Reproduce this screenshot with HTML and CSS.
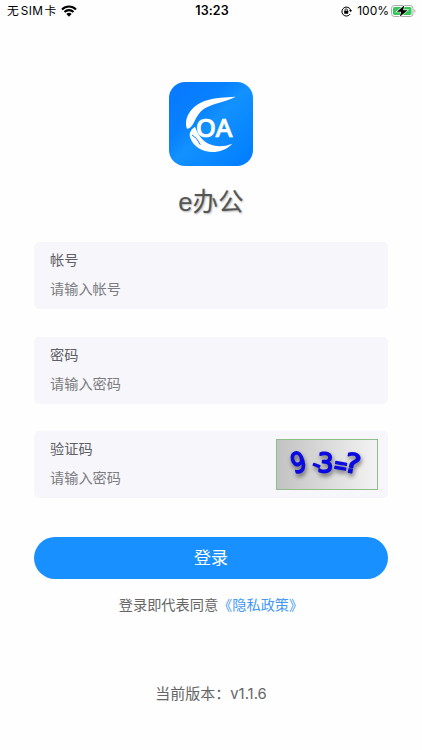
FILE: index.html
```html
<!DOCTYPE html>
<html lang="zh-CN">
<head>
    <meta charset="UTF-8">
    <meta name="viewport" content="width=device-width, initial-scale=1.0">
    <title>e办公</title>
    <link rel="stylesheet" href="styles.css">
</head>
<body>
    <header class="status-bar">
        <div class="status-left">
            <span>无</span><span class="sim">SIM</span><span>卡</span>
            <svg class="wifi" width="16" height="12" viewBox="0 0 16 12">
                <path d="M1 4.4a10 10 0 0 1 14 0M3.5 7a6.4 6.4 0 0 1 9 0" fill="none" stroke="#000" stroke-width="2.1"/>
                <path d="M8 11.7 5.4 9.1a3.7 3.7 0 0 1 5.2 0z"/>
            </svg>
        </div>
        <div class="status-time">13:23</div>
        <div class="status-right">
            <svg class="lock" width="11" height="11" viewBox="0 0 11 11">
                <path d="M9.7 4.2A4.5 4.5 0 1 0 9.2 8" fill="none" stroke="#000" stroke-width="1"/>
                <path d="M8 4.1h3L9.7 6.2z"/>
                <rect x="3.2" y="4.8" width="4" height="3" rx=".4"/>
                <path d="M4 5V4a1.2 1.2 0 0 1 2.4 0v1" fill="none" stroke="#000" stroke-width=".8"/>
            </svg>
            <span>100%</span>
            <svg class="battery" width="26" height="13" viewBox="0 0 26 13">
                <rect x=".5" y=".5" width="21.5" height="11" rx="3" fill="#fff" stroke="#aaa"/>
                <rect x="2" y="2" width="18.5" height="8" rx="1.7" fill="#35c759"/>
                <path d="M23.3 4.3c1.5.4 1.5 3 0 3.4z" fill="#aaa"/>
                <path class="bolt" d="M13.4.2 5.8 6.7h4.4L8.8 11.8 16.6 5.2h-4.5z"/>
            </svg>
        </div>
    </header>

    <main class="login">
        <svg class="logo" width="84" height="84" viewBox="0 0 252 252">
            <defs>
                <linearGradient id="logo-bg" x1="0" y1="0" x2="1" y2="1">
                    <stop offset="0" stop-color="#0878fd"/>
                    <stop offset=".35" stop-color="#0881ff"/>
                    <stop offset=".5" stop-color="#1291ff"/>
                    <stop offset="1" stop-color="#007cff"/>
                </linearGradient>
            </defs>
            <rect width="252" height="252" rx="48" fill="url(#logo-bg)"/>
            <g fill="#fff">
                <path d="M200 44C170 46 139 46 109 56C66 71 43 108 54 140C61 141 69 134 75 121C84 103 90 90 109 78C135 63 166 61 200 44Z"/>
                <path d="M78 134C65 143 60 154 63 165C76 211 148 228 190 185C158 198 122 194 103 175C92 164 84 151 78 134Z"/>
                <path d="M69 159L82 169L94 188" fill="none" stroke="#1688ff" stroke-width="3"/>
                <text class="logo-text" transform="translate(80 164) scale(1.02 1)" x="0" y="0">OA</text>
            </g>
        </svg>
        <h1>e办公</h1>

        <form class="form">
            <div class="field">
                <label for="account">帐号</label>
                <input type="text" id="account" placeholder="请输入帐号">
            </div>
            <div class="field">
                <label for="password">密码</label>
                <input type="password" id="password" placeholder="请输入密码">
            </div>
            <div class="field field-code">
                <div class="field-main">
                    <label for="code">验证码</label>
                    <input type="text" id="code" placeholder="请输入密码">
                </div>
                <svg class="captcha" width="102" height="51" viewBox="0 0 102 51">
                    <defs>
                        <linearGradient id="captcha-bg">
                            <stop offset="0" stop-color="#c2c2c2"/>
                            <stop offset="1" stop-color="#f3f3f3"/>
                        </linearGradient>
                    </defs>
                    <rect x=".5" y=".5" width="101" height="50" fill="url(#captcha-bg)" stroke="#8dbd89"/>
                    <g class="captcha-text">
                        <text transform="translate(18 35) rotate(-16) scale(.86 1.04)">9</text>
                        <text transform="translate(34 31) rotate(22) scale(.9)">-</text>
                        <text transform="translate(41 33) rotate(2) scale(.95 1)">3</text>
                        <text transform="translate(56 33) rotate(10) scale(.66 .9)">=</text>
                        <text transform="translate(67 32) rotate(12) scale(1.1 1)">?</text>
                    </g>
                </svg>
            </div>
            <button type="button" class="login-btn">登录</button>
        </form>

        <p class="agreement">登录即代表同意<a class="policy">《隐私政策》</a></p>
        <p class="version">当前版本：<span class="version-num">v1.1.6</span></p>
    </main>
</body>
</html>
```

FILE: styles.css
```css
* {
    box-sizing: border-box;
}
body {
    margin: 0;
    background: #fefefe;
    color: #666;
    font-family: "Liberation Sans", "Noto Sans CJK SC", sans-serif;
}
.status-bar {
    display: grid;
    grid-template-columns: 1fr auto 1fr;
    align-items: center;
    height: 22px;
    padding: 0 5px 0 7px;
    color: #000;
    font-family: Inter, "Noto Sans CJK SC", sans-serif;
    font-size: 12px;
    line-height: 22px;
}
.status-left,
.status-right {
    display: flex;
    align-items: center;
}
.status-left {
    font-size: 11.8px;
}
.status-left .sim {
    margin: 0 1.5px 0 2px;
    letter-spacing: 0.3px;
}
.wifi {
    margin-left: 5px;
}
.status-time {
    font-size: 12.5px;
    font-weight: 600;
    letter-spacing: 0.1px;
}
.status-right {
    justify-content: flex-end;
}
.lock {
    margin-right: 5px;
}
.battery {
    margin-left: 2px;
}
.bolt {
    stroke: #fff;
    stroke-width: 1.2px;
    paint-order: stroke;
}
.login {
    display: flex;
    flex-direction: column;
    align-items: center;
    padding: 60px 34px 0;
}
.logo-text {
    font-family: "Noto Sans", sans-serif;
    font-size: 76px;
    font-weight: 500;
    stroke: #fff;
    stroke-width: 2px;
}
h1 {
    margin: 16px 0 0;
    height: 40px;
    color: #555;
    font-size: 25.6px;
    font-weight: normal;
    line-height: 40px;
    text-shadow: 1px 1px 2px rgba(0, 0, 0, 0.3);
}
.form {
    width: 100%;
    margin-top: 20px;
}
.field {
    height: 67px;
    margin-bottom: 27.6px;
    padding: 8px 10px 0 16px;
    border-radius: 5px;
    background: #f6f6fb;
}
.field label {
    display: block;
    height: 20px;
    color: #606064;
    font-size: 14.2px;
    line-height: 20px;
}
.field input {
    display: block;
    width: 200px;
    height: 20px;
    margin-top: 9px;
    padding: 0;
    border: none;
    outline: none;
    background: none;
    font-family: inherit;
    font-size: 14.2px;
    line-height: 20px;
}
.field input::placeholder {
    color: #7d7d80;
}
.field-code {
    display: flex;
    justify-content: space-between;
    margin-bottom: 39px;
}
.captcha-text {
    fill: #0a0ae0;
    stroke: #0a0ae0;
    stroke-width: 1.6px;
    stroke-linejoin: round;
    font-family: "DejaVu Sans", sans-serif;
    font-size: 27px;
    filter: drop-shadow(1px 3px 2px rgba(0, 0, 0, 0.5));
}
.login-btn {
    display: block;
    width: 100%;
    height: 42px;
    padding: 2px 0 0;
    border: none;
    border-radius: 21px;
    background: #1890ff;
    color: #fff;
    font-family: inherit;
    font-size: 17px;
    line-height: 40px;
}
.agreement {
    margin: 15px 0 0;
    font-size: 14.2px;
    line-height: 22px;
}
.policy {
    color: #4499f5;
}
.version {
    margin: 67px 0 0;
    font-size: 15px;
    line-height: 22px;
}
.version-num {
    font-family: Inter, sans-serif;
    font-size: 14.8px;
}
```
